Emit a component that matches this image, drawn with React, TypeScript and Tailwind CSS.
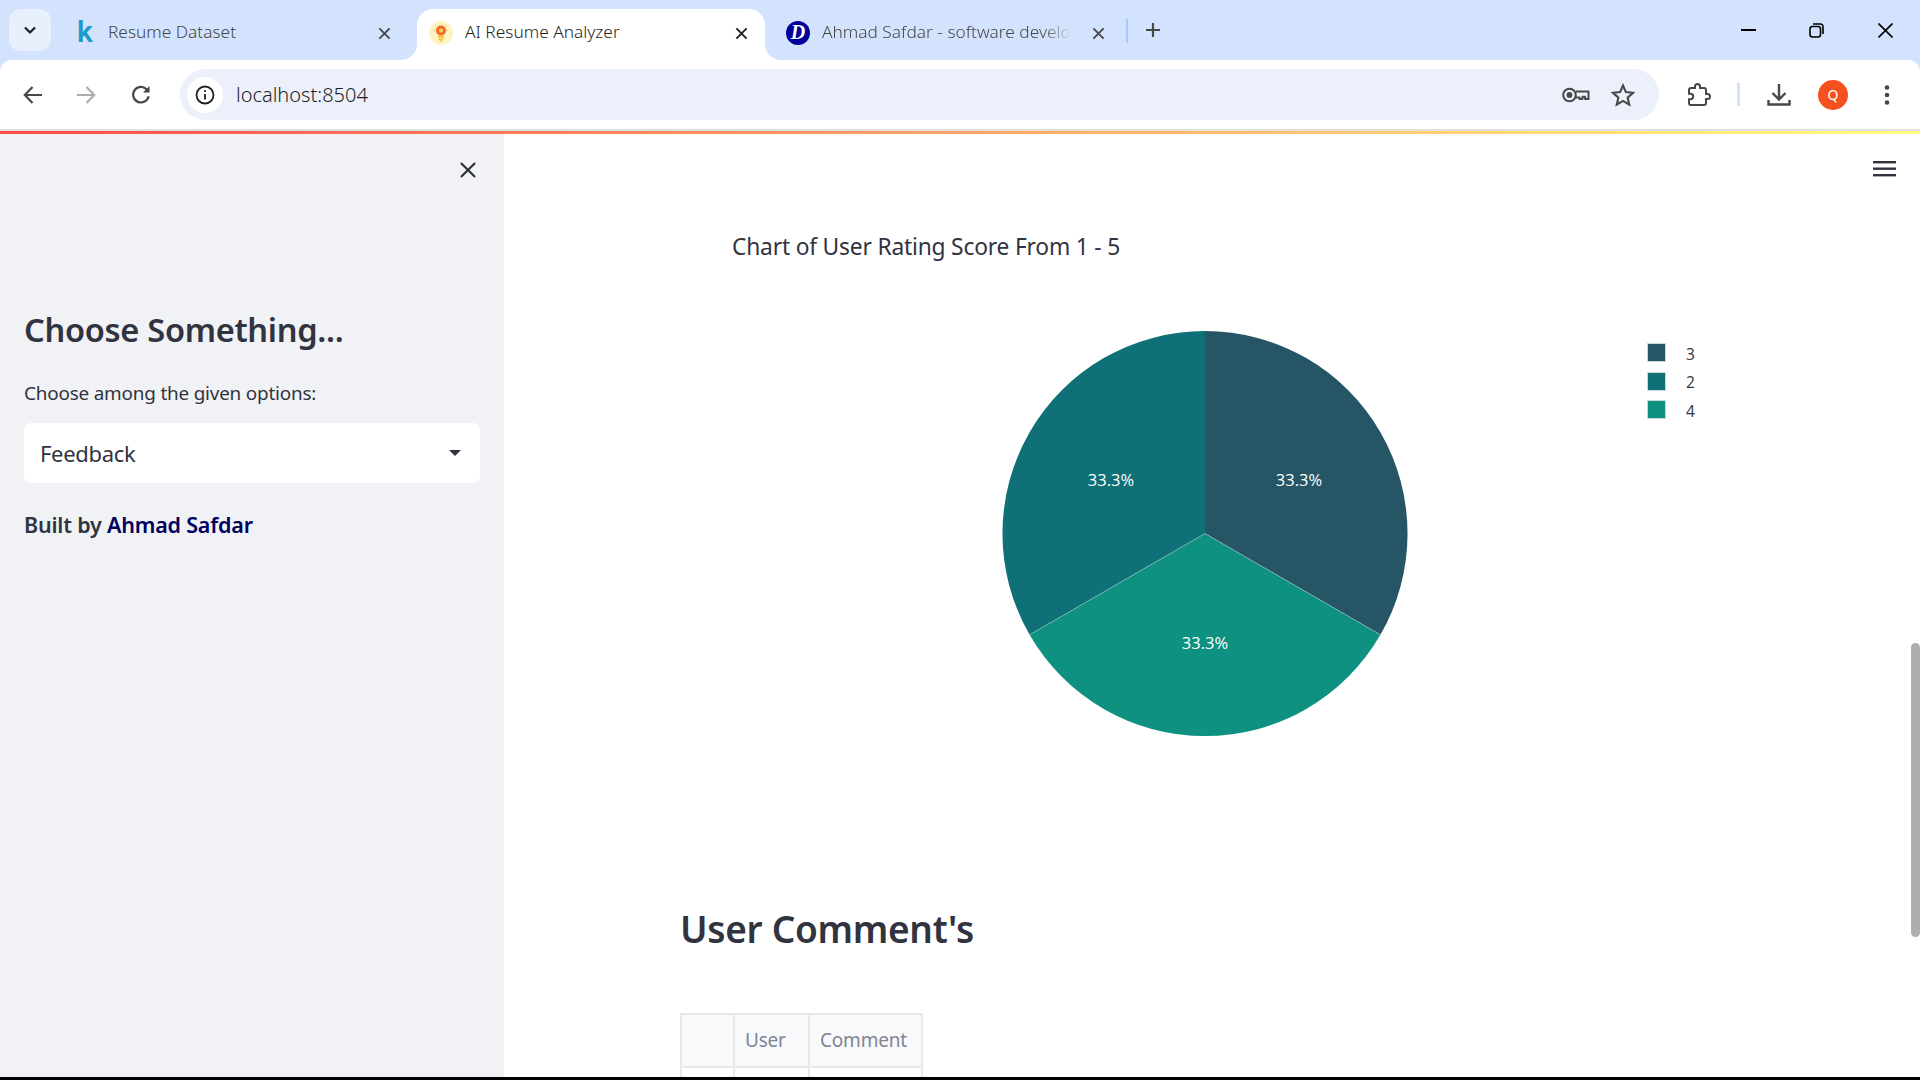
import React from "react";

const ui = { fontFamily: '"Noto Sans", "Open Sans", sans-serif' };
const st = { fontFamily: '"Noto Sans", "Open Sans", sans-serif' };

function X({ size = 14, color = "#474747", w = 2 }: { size?: number; color?: string; w?: number }) {
  return (
    <svg width={size} height={size} viewBox="0 0 14 14" fill="none" stroke={color} strokeWidth={w}>
      <path d="M1.500 1.500 12.500 12.500M12.500 1.500 1.500 12.500" />
    </svg>
  );
}

function Bulb() {
  return (
    <svg width="24" height="24" viewBox="0 0 24 24">
      <circle cx="12" cy="12" r="12" fill="#fff3c4" />
      <circle cx="12" cy="9.500" r="5" fill="#f4691e" />
      <circle cx="12" cy="9.500" r="2.200" fill="#fbc774" />
      <rect x="9" y="14.500" width="6" height="2" fill="#fbb92f" />
      <rect x="9.500" y="17.200" width="5" height="1.600" fill="#fbc02d" />
      <rect x="10.500" y="19.400" width="3" height="1.200" fill="#fbc02d" />
      <path d="M5 9.500h1.200M17.800 9.500H19M6.500 4.500l.8.8M17.500 4.500l-.8.8" stroke="#f9a13a" strokeWidth="1" />
    </svg>
  );
}

function Tab({
  icon,
  title,
  active,
  cls,
  textCls,
}: {
  icon: React.ReactNode;
  title: string;
  active?: boolean;
  cls: string;
  textCls: string;
}) {
  return (
    <div className={`relative flex h-[51px] items-center ${cls} ${active ? "rounded-t-[16px] bg-white" : ""}`}>
      {active && (
        <>
          <div className="absolute bottom-0 left-[-16px] h-4 w-4 bg-white">
            <div className="h-4 w-4 rounded-br-[16px] bg-[#d3e3fd]" />
          </div>
          <div className="absolute bottom-0 right-[-16px] h-4 w-4 bg-white">
            <div className="h-4 w-4 rounded-bl-[16px] bg-[#d3e3fd]" />
          </div>
        </>
      )}
      {icon}
      <div
        className={`min-w-0 flex-1 overflow-hidden whitespace-nowrap pb-[5px] text-[17.300px] font-light leading-[24px] ${textCls} ${active ? "text-[#1f1f1f]" : "text-[#474747]"}`}
      >
        {title}
      </div>
      <div className="flex h-5 w-5 items-center justify-center pb-[3px]">
        <X size={13} color={active ? "#1f1f1f" : "#474747"} />
      </div>
    </div>
  );
}

function TabStrip() {
  return (
    <div className="flex h-[60px] bg-[#d3e3fd] pl-[9px] pt-[9px]" style={ui}>
      <div className="flex h-[42px] w-[42px] items-center justify-center rounded-[12px] bg-[#e8f0fe]">
        <svg width="14" height="10" viewBox="0 0 14 10" fill="none" stroke="#1f1f1f" strokeWidth="2.200">
          <path d="M2 2.500 7 7.500 12 2.500" />
        </svg>
      </div>
      <Tab
        cls="ml-[9px] w-[357px] pl-[17px] pr-[23px]"
        textCls="ml-[18px]"
        title="Resume Dataset"
        icon={
          <span className="w-[13px] pb-[6px] text-[30px] font-semibold leading-[30px] text-[#1d9ac9]" style={{ fontFamily: "Roboto, sans-serif" }}>
            k
          </span>
        }
      />
      <Tab active cls="w-[348px] pl-[12px] pr-[14px]" textCls="ml-[12px]" title="AI Resume Analyzer" icon={<div className="pb-[3px]"><Bulb /></div>} />
      <Tab
        cls="w-[348px] pl-[21px] pr-[5px]"
        textCls="ml-[12px] mr-[16px] [mask-image:linear-gradient(to_right,black_88%,transparent_100%)]"
        title="Ahmad Safdar - software developer"
        icon={
          <div className="pb-[4px]">
            <span className="flex h-6 w-6 items-center justify-center rounded-full bg-[#00009c] pb-[1px] text-[20px] font-bold italic leading-none text-white" style={{ fontFamily: '"Liberation Serif", serif' }}>
              D
            </span>
          </div>
        }
      />
      <div className="ml-[13px] mt-[10px] h-6 w-[2px] bg-[#a8c7fa]" />
      <div className="ml-[17px] flex h-[42px] w-4 items-center justify-center">
        <svg width="16" height="16" viewBox="0 0 16 16" stroke="#474747" strokeWidth="2.200">
          <path d="M8 1v14M1 8h14" />
        </svg>
      </div>
      <div className="ml-auto flex h-[42px] items-center pr-[27px]">
        <svg width="15" height="2" viewBox="0 0 15 2"><rect width="15" height="2" fill="#000" /></svg>
        <svg className="ml-[53px]" width="15" height="15" viewBox="0 0 15 15" fill="none" stroke="#000" strokeWidth="1.600">
          <rect x="1" y="3.500" width="10.500" height="10.500" rx="2.500" />
          <path d="M4 1h7.500A2.500 2.500 0 0 1 14 3.500V11" />
        </svg>
        <svg className="ml-[54px]" width="15" height="15" viewBox="0 0 15 15" fill="none" stroke="#000" strokeWidth="1.600">
          <path d="M.5.5l14 14M14.500.5l-14 14" />
        </svg>
      </div>
    </div>
  );
}

function Toolbar() {
  return (
    <div className="bg-[#d3e3fd]">
      <div className="flex h-[69px] items-center rounded-t-[12px] bg-white">
        <div className="ml-[21px] flex items-center">
          <svg width="24" height="24" viewBox="0 0 24 24" fill="none" stroke="#474747" strokeWidth="2.200">
            <path d="M21 12H4M11.500 4 3.800 12l7.700 8" />
          </svg>
          <svg className="ml-[29px]" width="24" height="24" viewBox="0 0 24 24" fill="none" stroke="#acacac" strokeWidth="2.200">
            <path d="M3 12h17M12.500 4l7.700 8-7.700 8" />
          </svg>
          <svg className="ml-[31px]" width="24" height="24" viewBox="0 0 24 24" fill="none" stroke="#474747" strokeWidth="2.200">
            <path d="M19.600 13.200A7.800 7.800 0 1 1 17.500 6.200L20 8.500" />
            <path d="M20.500 3v6.500H14" fill="#474747" stroke="none" />
          </svg>
        </div>
        <div className="ml-[27px] flex h-[51px] w-[1479px] items-center rounded-full bg-[#ebf0fa] pl-[7px] pr-[24px]">
          <div className="flex h-9 w-9 items-center justify-center rounded-full bg-white">
            <svg width="20" height="20" viewBox="0 0 20 20" fill="none" stroke="#1f1f1f" strokeWidth="1.800">
              <circle cx="10" cy="10" r="8.500" />
              <path d="M10 9v5.500" />
              <path d="M10 5.200v1.800" />
            </svg>
          </div>
          <div className="ml-[13px] flex-1 text-[20px] font-light text-[#1f1f1f]" style={ui}>
            localhost:8504
          </div>
          <svg width="28" height="16" viewBox="0 0 28 16" fill="none" stroke="#474747" strokeWidth="2">
            <circle cx="7.500" cy="8" r="6.300" />
            <circle cx="7.500" cy="8" r="2.900" fill="#474747" stroke="none" />
            <path d="M14 4.500H26.500V12H23V9.800H20.500V12H17.500V10.500H14" strokeLinejoin="round" />
          </svg>
          <svg className="ml-[21px]" width="24" height="24" viewBox="0 0 24 24" fill="none" stroke="#474747" strokeWidth="2.100">
            <path d="M12 2.500 14.900 9.100 22 9.800 16.600 14.600 18.200 21.600 12 17.900 5.800 21.600 7.400 14.600 2 9.800 9.100 9.100Z" />
          </svg>
        </div>
        <svg className="ml-[28px]" width="24" height="24" viewBox="0 0 24 24" fill="none" stroke="#474747" strokeWidth="2">
          <path d="M20.500 11H19V7c0-1.100-.9-2-2-2h-4V3.500C13 2.120 11.880 1 10.500 1S8 2.120 8 3.500V5H4c-1.100 0-1.990.9-1.990 2v3.800H3.500c1.490 0 2.700 1.210 2.700 2.700s-1.210 2.700-2.700 2.700H2V20c0 1.100.9 2 2 2h13c1.100 0 2-.9 2-2v-4h1.500c1.380 0 2.500-1.120 2.500-2.500S21.880 11 20.500 11z" />
        </svg>
        <div className="ml-[26px] h-[23px] w-[3px] bg-[#d3e3fd]" />
        <svg className="ml-[27px]" width="24" height="24" viewBox="0 0 24 24" fill="none" stroke="#474747" strokeWidth="2.400">
          <path d="M12 1v15M5.500 10l6.500 6.500 6.500-6.500" />
          <path d="M1.500 17v4.500h21V17" />
        </svg>
        <div className="ml-[27px] flex h-[30px] w-[30px] items-center justify-center rounded-full bg-[#f4511e] text-[14px] leading-none text-white" style={ui}>
          Q
        </div>
        <svg className="ml-[27px]" width="24" height="24" viewBox="0 0 24 24" fill="#474747">
          <circle cx="12" cy="4.500" r="2.300" />
          <circle cx="12" cy="12" r="2.300" />
          <circle cx="12" cy="19.500" r="2.300" />
        </svg>
      </div>
    </div>
  );
}

function Sidebar() {
  return (
    <aside className="relative w-[504px] shrink-0 bg-[#f0f2f6] px-6 pt-[173px] text-[#31333f]" style={st}>
      <div className="absolute left-[459px] top-[27px]">
        <X size={18} color="#31333f" w={1.700} />
      </div>
      <h2 className="text-[32.600px] font-semibold leading-[46px] tracking-[-0.3px]">Choose Something...</h2>
      <div className="mt-[26px] text-[18.900px] leading-[28px] tracking-[-0.2px]">Choose among the given options:</div>
      <div className="mt-[16px] flex h-[60px] w-[456px] items-center justify-between rounded-[7px] bg-white pl-[16px] pr-[19px]">
        <span className="text-[22px] tracking-[-0.3px]">Feedback</span>
        <svg width="12" height="6" viewBox="0 0 12 6">
          <path d="M0 0h12L6 6z" fill="#31333f" />
        </svg>
      </div>
      <div className="mt-[26px] text-[21.500px] font-semibold leading-[32px] tracking-[-0.2px]">
        Built by <span className="text-[#00005f]">Ahmad Safdar</span>
      </div>
    </aside>
  );
}

function PieChart() {
  const label = { fontFamily: '"Open Sans", sans-serif' };
  return (
    <svg className="mt-[37px] block" width="1100" height="500" viewBox="0 0 1100 500">
      <path d="M525 233.500V31A202.500 202.500 0 0 1 700.400 334.750Z" fill="#265565" />
      <path d="M525 233.500 700.400 334.750A202.500 202.500 0 0 1 349.600 334.750Z" fill="#0e9180" />
      <path d="M525 233.500 349.600 334.750A202.500 202.500 0 0 1 525 31Z" fill="#0f7077" />
      <path d="M349.600 334.750 525 233.500 700.400 334.750" fill="none" stroke="#fff" strokeOpacity="0.3" strokeWidth="1" />
      <g fill="#fff" fontSize="16.500" textAnchor="middle" style={label}>
        <text x="619" y="186">33.3%</text>
        <text x="431" y="186">33.3%</text>
        <text x="525" y="349">33.3%</text>
      </g>
      <rect x="967.500" y="43.500" width="18" height="18" fill="#265565" stroke="#c5d9de" />
      <rect x="967.500" y="72.500" width="18" height="18" fill="#0f7077" stroke="#c5d9de" />
      <rect x="967.500" y="100.500" width="18" height="18" fill="#0e9180" stroke="#c5d9de" />
      <g fill="#31333f" fontSize="15.500" style={label}>
        <text x="1006" y="60">3</text>
        <text x="1006" y="88">2</text>
        <text x="1006" y="117">4</text>
      </g>
    </svg>
  );
}

function CommentTable() {
  const h = "flex items-center border-r-2 border-[#e6e8ec] px-[10px] text-[19px] tracking-[-0.2px] text-[#808495] bg-[#f8f9fb]";
  return (
    <div className="mt-[56px] w-[243px] border-l-2 border-t-2 border-[#e6e8ec]">
      <div className="grid h-[53px] grid-cols-[53px_75px_113px] border-b-2 border-[#e6e8ec]">
        <div className={h} />
        <div className={h}>User</div>
        <div className={`${h} whitespace-nowrap`}>Comment</div>
      </div>
      <div className="grid h-[40px] grid-cols-[53px_75px_113px]">
        <div className="border-r-2 border-[#e6e8ec]" />
        <div className="border-r-2 border-[#e6e8ec]" />
        <div className="border-r-2 border-[#e6e8ec]" />
      </div>
    </div>
  );
}

function Main() {
  return (
    <main className="relative min-w-0 flex-1 overflow-hidden bg-white pl-[176px] pt-[97px] text-[#31333f]" style={st}>
      <div className="absolute right-[24px] top-[27px]">
        <svg className="block" width="23" height="16" viewBox="0 0 23 16" fill="#31333f">
          <rect width="23" height="2.400" y="0" />
          <rect width="23" height="2.400" y="6.500" />
          <rect width="23" height="2.400" y="13" />
        </svg>
      </div>
      <div className="absolute right-0 top-[509px] h-[294px] w-[9px] rounded-full bg-[#aeaeb2]" />
      <div className="ml-[52px] text-[22.800px] leading-[32px] tracking-[-0.2px]">Chart of User Rating Score From 1 - 5</div>
      <PieChart />
      <h2 className="mt-[101px] text-[37px] font-semibold leading-[56px] tracking-[-0.3px]">User Comment's</h2>
      <CommentTable />
    </main>
  );
}

export default function App() {
  return (
    <div className="flex h-[1080px] w-[1920px] flex-col overflow-hidden bg-white">
      <TabStrip />
      <Toolbar />
      <div className="h-[2px] bg-[#e0e0e0]" />
      <div className="h-[3px] bg-[linear-gradient(90deg,#ff4b4b,#fffd80)]" />
      <div className="flex min-h-0 flex-1">
        <Sidebar />
        <Main />
      </div>
      <div className="h-[3px] bg-black" />
    </div>
  );
}
